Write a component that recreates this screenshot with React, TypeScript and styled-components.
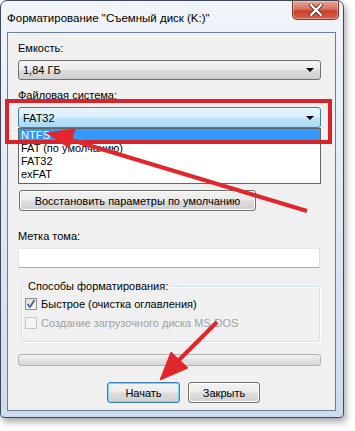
import styled, { createGlobalStyle } from 'styled-components';

const GlobalStyle = createGlobalStyle`
  body {
    margin: 0;
    background: #ffffff;
    font-family: "Liberation Sans", Arial, sans-serif;
    font-size: 11px;
    color: #000;
  }
`;

const Page = styled.div`
  position: relative;
  width: 355px;
  height: 431px;
  overflow: hidden;
`;

const Window = styled.div`
  box-sizing: border-box;
  width: 344px;
  height: 418px;
  border: 1px solid #3e4856;
  border-radius: 7px 7px 4px 4px;
  background: linear-gradient(180deg, #f1f5fa 0%, #e3ebf5 40%, #cddcee 100%);
  box-shadow: 2px 4px 7px rgba(0, 0, 0, 0.35);
  display: flex;
  flex-direction: column;
`;

const TitleBar = styled.div`
  height: 31px;
  display: flex;
  justify-content: space-between;
  padding: 0 4px 0 6px;
`;

const Title = styled.div`
  align-self: center;
  margin-top: 2px;
  font-size: 11.5px;
`;

const CloseButton = styled.div`
  width: 47px;
  height: 19px;
  box-sizing: border-box;
  border: 1px solid #7a3a34;
  border-top: none;
  border-radius: 0 0 5px 5px;
  background: linear-gradient(180deg, #e8a597 0%, #d8705e 45%, #c7402a 55%, #d8604c 100%);
  display: flex;
  align-items: center;
  justify-content: center;
  box-shadow: inset 0 0 0 1px rgba(255, 255, 255, 0.35);
`;

const Client = styled.div`
  flex: 1;
  margin: 0 7px 6px 6px;
  border: 1px solid #6d7f96;
  background: #f0f0f0;
  padding: 0 14px 0 10px;
  display: flex;
  flex-direction: column;
`;

const Label = styled.div<{ $top: number }>`
  line-height: 15px;
  margin-top: ${(p) => p.$top}px;
  margin-bottom: 4px;
`;

const Combo = styled.div<{ $focused?: boolean }>`
  box-sizing: border-box;
  height: ${(p) => (p.$focused ? 21 : 20)}px;
  border: 1px solid ${(p) => (p.$focused ? '#3c7fb1' : '#707070')};
  border-radius: 3px;
  background: ${(p) =>
    p.$focused
      ? 'linear-gradient(180deg, #eaf6fd 0%, #d9f0fc 48%, #bee6fd 52%, #a7d9f5 100%)'
      : 'linear-gradient(180deg, #f5f5f5 0%, #ebebeb 48%, #dddddd 52%, #cfcfcf 100%)'};
  display: flex;
  align-items: center;
  justify-content: space-between;
  padding: 0 6px 0 4px;
`;

const Arrow = styled.span`
  width: 0;
  height: 0;
  border-left: 4px solid transparent;
  border-right: 4px solid transparent;
  border-top: 4px solid #000;
`;

const List = styled.div`
  border: 1px solid #646464;
  background: #fff;
  display: flex;
  flex-direction: column;
  padding-bottom: 2px;
`;

const Item = styled.div<{ $selected?: boolean }>`
  height: 13px;
  line-height: 13px;
  padding-left: 2px;
  background: ${(p) => (p.$selected ? '#3399ff' : 'transparent')};
  color: ${(p) => (p.$selected ? '#fff' : '#000')};
`;

const Button = styled.div<{ $focused?: boolean; $width: number }>`
  box-sizing: border-box;
  width: ${(p) => p.$width}px;
  height: 21px;
  border: 1px solid ${(p) => (p.$focused ? '#3c7fb1' : '#707070')};
  border-radius: 3px;
  background: linear-gradient(180deg, #f2f2f2 0%, #ebebeb 48%, #dddddd 52%, #cfcfcf 100%);
  box-shadow: ${(p) =>
    p.$focused ? 'inset 0 0 0 1px #7fd1f3' : 'inset 0 0 0 1px #fcfcfc'};
  display: flex;
  align-items: center;
  justify-content: center;
`;

const RestoreRow = styled.div`
  margin-top: 6px;
  padding-left: 1px;
`;

const TextInput = styled.div`
  box-sizing: border-box;
  height: 20px;
  border: 1px solid #abadb3;
  border-top-color: #e3e9ef;
  border-right-color: #dbdfe6;
  border-left-color: #e2e3ea;
  background: #fff;
  margin-right: 1px;
`;

const Group = styled.fieldset`
  box-sizing: border-box;
  margin: 11px 1px 0 3px;
  height: 63px;
  border: 1px solid #d5dfe5;
  border-radius: 3px;
  box-shadow: inset 1px 1px 0 #fff, 1px 1px 0 #fff;
  padding: 3px 0 0 3px;
  display: flex;
  flex-direction: column;
  gap: 6px;
`;

const Legend = styled.legend`
  padding: 0 2px 0 2px;
  margin-left: 1px;
  line-height: 15px;
`;

const CheckRow = styled.div<{ $disabled?: boolean }>`
  display: flex;
  align-items: center;
  gap: 4px;
  height: 13px;
  color: ${(p) => (p.$disabled ? '#a0a0a0' : '#000')};
`;

const Box = styled.span<{ $disabled?: boolean }>`
  box-sizing: border-box;
  width: 12px;
  height: 12px;
  border: 1px solid ${(p) => (p.$disabled ? '#c8c8c8' : '#8f8f8f')};
  background: ${(p) =>
    p.$disabled ? '#f4f4f4' : 'linear-gradient(135deg, #dcdcdc 0%, #ffffff 100%)'};
  display: flex;
  align-items: center;
  justify-content: center;
`;

const Progress = styled.div`
  box-sizing: border-box;
  margin-top: 12px;
  height: 12px;
  border: 1px solid #b2b2b2;
  border-radius: 3px;
  background: linear-gradient(180deg, #f3f3f3 0%, #e2e2e2 50%, #d6d6d6 100%);
`;

const ButtonRow = styled.div`
  margin-top: 16px;
  display: flex;
  justify-content: center;
  gap: 8px;
  padding-left: 28px;
`;

const Highlight = styled.div`
  position: absolute;
  left: 5px;
  top: 99px;
  width: 327px;
  height: 45px;
  box-sizing: border-box;
  border: 4px solid #d9232b;
  pointer-events: none;
`;

const Annotations = styled.svg`
  position: absolute;
  left: 0;
  top: 0;
  pointer-events: none;
`;

export default function App() {
  return (
    <Page>
      <GlobalStyle />
      <Window>
        <TitleBar>
          <Title>Форматирование "Съемный диск (K:)"</Title>
          <CloseButton>
            <svg width="14" height="12" viewBox="0 0 14 12">
              <path
                d="M2 1 L12 11 M12 1 L2 11"
                stroke="#5a2a22"
                strokeWidth="4"
                strokeLinecap="round"
              />
              <path
                d="M2 1 L12 11 M12 1 L2 11"
                stroke="#ffffff"
                strokeWidth="2.4"
                strokeLinecap="round"
              />
            </svg>
          </CloseButton>
        </TitleBar>
        <Client>
          <Label $top={8}>Емкость:</Label>
          <Combo>
            <span>1,84 ГБ</span>
            <Arrow />
          </Combo>
          <Label $top={8}>Файловая система:</Label>
          <Combo $focused>
            <span>FAT32</span>
            <Arrow />
          </Combo>
          <List>
            <Item $selected>NTFS</Item>
            <Item>FAT (по умолчанию)</Item>
            <Item>FAT32</Item>
            <Item>exFAT</Item>
          </List>
          <RestoreRow>
            <Button $width={237}>Восстановить параметры по умолчанию</Button>
          </RestoreRow>
          <Label $top={18}>Метка тома:</Label>
          <TextInput />
          <Group>
            <Legend>Способы форматирования:</Legend>
            <CheckRow>
              <Box>
                <svg width="10" height="10" viewBox="0 0 10 10">
                  <path
                    d="M1.5 5 L4 8 L8.5 1"
                    stroke="#4a5f97"
                    strokeWidth="1.8"
                    fill="none"
                  />
                </svg>
              </Box>
              <span>Быстрое (очистка оглавления)</span>
            </CheckRow>
            <CheckRow $disabled>
              <Box $disabled />
              <span>Создание загрузочного диска MS-DOS</span>
            </CheckRow>
          </Group>
          <Progress />
          <ButtonRow>
            <Button $focused $width={73}>
              Начать
            </Button>
            <Button $width={72}>Закрыть</Button>
          </ButtonRow>
        </Client>
      </Window>
      <Highlight />
      <Annotations width="355" height="431" viewBox="0 0 355 431">
        <g fill="#e1262c" stroke="#e1262c">
          <line x1="307" y1="211" x2="68" y2="139" strokeWidth="4" />
          <polygon points="47,133 75,129 69,148" strokeWidth="1" />
          <line x1="217" y1="322" x2="177" y2="362" strokeWidth="4" />
          <polygon points="160,380 171,352 188,368" strokeWidth="1" />
        </g>
      </Annotations>
    </Page>
  );
}
